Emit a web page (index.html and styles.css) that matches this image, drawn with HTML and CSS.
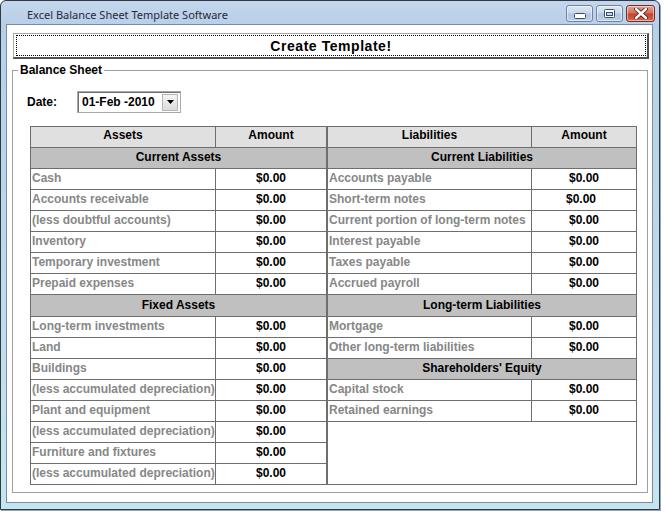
FILE: index.html
```html
<!DOCTYPE html>
<html>
<head>
<meta charset="utf-8">
<link rel="stylesheet" href="styles.css">
</head>
<body>
<div class="window">
  <div class="titlebar">
    <span class="title">Excel Balance Sheet Template Software</span>
    <div class="controls">
      <span class="wbtn min"><svg width="12" height="6" viewBox="0 0 12 6"><rect x="0.5" y="0.5" width="11" height="5" rx="1" fill="#fff" stroke="#3b4f6a"/></svg></span>
      <span class="wbtn max"><svg width="11" height="9" viewBox="0 0 11 9"><rect x="0.5" y="0.5" width="10" height="8" rx="1" fill="#fff" stroke="#3b4f6a"/><rect x="2.5" y="3.5" width="6" height="3" fill="#c7d6ea" stroke="#3b4f6a"/></svg></span>
      <span class="wbtn close"><svg width="14" height="11" viewBox="0 0 14 11"><path d="M2 1 L12 10 M12 1 L2 10" stroke="#5a1a14" stroke-width="4.2" stroke-linecap="round"/><path d="M2 1 L12 10 M12 1 L2 10" stroke="#fff" stroke-width="2.4" stroke-linecap="round"/></svg></span>
    </div>
  </div>
  <div class="client">
    <div class="create-btn"><div class="focus">Create Template!</div></div>
    <fieldset class="group">
      <legend>Balance Sheet</legend>
      <div class="group-body">
        <div class="date-row">
          <span class="date-label">Date:</span>
          <div class="combo">
            <span class="combo-text">01-Feb -2010</span>
            <span class="combo-arrow"><svg width="7" height="4" viewBox="0 0 7 4"><path d="M0 0 H7 L3.5 4 Z" fill="#000"/></svg></span>
          </div>
        </div>
        <div class="tables">
          <div class="tbl left">
            <div class="row head"><span class="c lab">Assets</span><span class="c amt">Amount</span></div>
            <div class="row sec"><span class="c">Current Assets</span></div>
            <div class="row"><span class="c lab">Cash</span><span class="c amt">$0.00</span></div>
            <div class="row"><span class="c lab">Accounts receivable</span><span class="c amt">$0.00</span></div>
            <div class="row"><span class="c lab">(less doubtful accounts)</span><span class="c amt">$0.00</span></div>
            <div class="row"><span class="c lab">Inventory</span><span class="c amt">$0.00</span></div>
            <div class="row"><span class="c lab">Temporary investment</span><span class="c amt">$0.00</span></div>
            <div class="row"><span class="c lab">Prepaid expenses</span><span class="c amt">$0.00</span></div>
            <div class="row sec tall"><span class="c">Fixed Assets</span></div>
            <div class="row"><span class="c lab">Long-term investments</span><span class="c amt">$0.00</span></div>
            <div class="row"><span class="c lab">Land</span><span class="c amt">$0.00</span></div>
            <div class="row"><span class="c lab">Buildings</span><span class="c amt">$0.00</span></div>
            <div class="row"><span class="c lab">(less accumulated depreciation)</span><span class="c amt">$0.00</span></div>
            <div class="row"><span class="c lab">Plant and equipment</span><span class="c amt">$0.00</span></div>
            <div class="row"><span class="c lab">(less accumulated depreciation)</span><span class="c amt">$0.00</span></div>
            <div class="row"><span class="c lab">Furniture and fixtures</span><span class="c amt">$0.00</span></div>
            <div class="row"><span class="c lab">(less accumulated depreciation)</span><span class="c amt">$0.00</span></div>
          </div>
          <div class="tbl right">
            <div class="row head"><span class="c lab">Liabilities</span><span class="c amt">Amount</span></div>
            <div class="row sec"><span class="c">Current Liabilities</span></div>
            <div class="row"><span class="c lab">Accounts payable</span><span class="c amt">$0.00</span></div>
            <div class="row"><span class="c lab">Short-term notes</span><span class="c amt shift">$0.00</span></div>
            <div class="row"><span class="c lab">Current portion of long-term notes</span><span class="c amt">$0.00</span></div>
            <div class="row"><span class="c lab">Interest payable</span><span class="c amt">$0.00</span></div>
            <div class="row"><span class="c lab">Taxes payable</span><span class="c amt">$0.00</span></div>
            <div class="row"><span class="c lab">Accrued payroll</span><span class="c amt">$0.00</span></div>
            <div class="row sec tall"><span class="c">Long-term Liabilities</span></div>
            <div class="row"><span class="c lab">Mortgage</span><span class="c amt">$0.00</span></div>
            <div class="row"><span class="c lab">Other long-term liabilities</span><span class="c amt">$0.00</span></div>
            <div class="row sec"><span class="c">Shareholders' Equity</span></div>
            <div class="row"><span class="c lab">Capital stock</span><span class="c amt">$0.00</span></div>
            <div class="row"><span class="c lab">Retained earnings</span><span class="c amt">$0.00</span></div>
            <div class="filler"></div>
          </div>
        </div>
      </div>
    </fieldset>
  </div>
</div>
</body>
</html>
```

FILE: styles.css
```css
* { box-sizing: border-box; }
html, body { margin: 0; padding: 0; background: #fff; }
body { width: 666px; height: 512px; overflow: hidden; font-family: "Liberation Sans", Arial, sans-serif; }

.window {
  width: 660px;
  height: 510px;
  border: 1px solid #2f3a48;
  border-radius: 6px 6px 0 0;
  background: linear-gradient(to bottom, #c3d6ec 0px, #b9cfe8 24px, #bdd6ea 200px, #c5e6f0 510px);
  padding: 0 6px 6px 5px;
  display: flex;
  flex-direction: column;
  box-shadow: 1px 1px 0 #9aa4ae;
}

.titlebar {
  height: 23px;
  display: flex;
  align-items: flex-start;
  justify-content: space-between;
}
.title {
  font-family: "Noto Sans", "Open Sans", sans-serif;
  font-size: 11px;
  color: #1d2a3a;
  margin-left: 21px;
  margin-top: 6px;
  line-height: 16px;
}
.controls {
  display: flex;
  gap: 3px;
  margin-top: 4px;
  margin-right: -2px;
}
.wbtn {
  width: 27px;
  height: 17px;
  border: 1px solid #6f84a2;
  border-radius: 3px;
  display: flex;
  align-items: center;
  justify-content: center;
  background: linear-gradient(to bottom, #dfe8f4 0%, #c9d8eb 45%, #b2c7e1 55%, #bcd0e8 100%);
  box-shadow: inset 0 0 0 1px rgba(255,255,255,0.5);
}
.wbtn.min svg { margin-top: 5px; }
.wbtn.close {
  width: 29px;
  border-color: #7a2b22;
  background: linear-gradient(to bottom, #e5a393 0%, #d6705d 45%, #c4442f 55%, #d16a52 100%);
}

.client {
  flex: 1;
  background: #fff;
  border: 1px solid #7b8da4;
  display: flex;
  flex-direction: column;
}

.create-btn {
  margin: 8px 3px 0 6px;
  height: 26px;
  border-top: 1px solid #a8a8a8;
  border-left: 1px solid #a8a8a8;
  border-right: 2px solid #505050;
  border-bottom: 2px solid #505050;
  padding: 1px 1px 1px 2px;
  background: #fff;
}
.focus {
  height: 100%;
  border: 1px dotted #000;
  font-family: "Liberation Sans", Arial, sans-serif;
  font-weight: bold;
  font-size: 14px;
  letter-spacing: 0.55px;
  color: #000;
  display: flex;
  align-items: center;
  justify-content: center;
}

.group {
  margin: 4px 4px 0 5px;
  padding: 0;
  border: 1px solid #a0a0a0;
  min-width: 0;
}
.group legend {
  margin-left: 5px;
  padding: 0 2px;
  font-weight: bold;
  font-size: 12px;
  line-height: 14px;
  color: #000;
}
.group-body {
  padding: 14px 9px 7px 14px;
}

.date-row {
  display: flex;
  align-items: center;
  height: 22px;
}
.date-label {
  font-weight: bold;
  font-size: 12px;
  color: #000;
  width: 50px;
}
.combo {
  width: 104px;
  height: 22px;
  border: 1px solid #a9a9a9;
  box-shadow: inset 1px 1px 0 #707070;
  display: flex;
  align-items: center;
  justify-content: space-between;
  padding: 2px 2px 2px 4px;
}
.combo-text {
  font-weight: bold;
  font-size: 12px;
  color: #000;
}
.combo-arrow {
  width: 16px;
  height: 17px;
  border: 1px solid #b5b5b5;
  background: linear-gradient(to bottom, #f4f4f4, #dcdcdc);
  display: flex;
  align-items: center;
  justify-content: center;
}

.tables {
  display: flex;
  margin: 13px 0 0 3px;
  align-items: stretch;
}
.tbl {
  display: flex;
  flex-direction: column;
  border: 1px solid #6e6e6e;
  border-bottom: none;
}
.tbl.left { width: 297px; }
.tbl.right { width: 310px; border-bottom: 1px solid #6e6e6e; }
.tbl.left .lab { width: 185px; }
.tbl.right .lab { width: 204px; }

.row {
  display: flex;
  height: 21px;
  border-bottom: 1px solid #6e6e6e;
  font-size: 12px;
  font-weight: bold;
  line-height: 19px;
}
.row.tall { height: 22px; line-height: 21px; }
.c {
  white-space: nowrap;
  overflow: hidden;
}
.lab {
  border-right: 1px solid #6e6e6e;
  color: #878787;
  padding-left: 1px;
}
.amt {
  flex: 1;
  text-align: center;
  color: #000;
}
.amt.shift { padding-right: 6px; }

.row.head { background: #e0e0e0; line-height: 16px; }
.row.head .lab { color: #000; text-align: center; padding-left: 0; }
.row.sec { background: #c0c0c0; }
.row.sec .c { flex: 1; text-align: center; color: #000; }

.filler { flex: 1; }
```
